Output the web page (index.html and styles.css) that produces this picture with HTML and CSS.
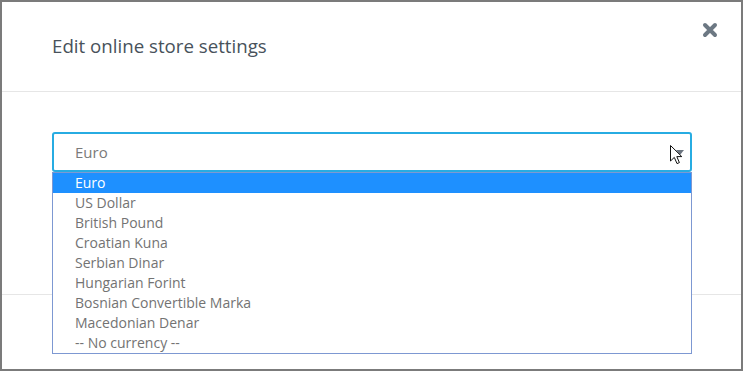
FILE: index.html
```html
<!DOCTYPE html>
<html lang="en">
<head>
    <meta charset="UTF-8">
    <meta name="viewport" content="width=device-width, initial-scale=1.0">
    <title>Edit online store settings</title>
    <link rel="stylesheet" href="styles.css">
</head>
<body>
    <div class="modal">
        <div class="modal-header">
            <h4 class="modal-title">Edit online store settings</h4>
            <button class="close" type="button" aria-label="Close">
                <svg width="16" height="16" viewBox="0 0 16 16">
                    <path d="M3 3 L13 13 M13 3 L3 13" stroke="#6c7883" stroke-width="4" stroke-linecap="round"/>
                </svg>
            </button>
        </div>

        <div class="modal-body">
            <div class="select-wrap">
                <div class="select">
                    <span class="select-value">Euro</span>
                    <span class="select-arrow"></span>
                </div>
                <svg class="cursor" width="13" height="20" viewBox="0 0 13 20">
                    <path d="M0.5 0.5 L0.5 16 L4.3 12.4 L7 18.6 L9.4 17.6 L6.8 11.6 L11.8 11.6 Z" fill="#fff" stroke="#111" stroke-width="1"/>
                </svg>
                <ul class="options">
                    <li class="option selected">Euro</li>
                    <li class="option">US Dollar</li>
                    <li class="option">British Pound</li>
                    <li class="option">Croatian Kuna</li>
                    <li class="option">Serbian Dinar</li>
                    <li class="option">Hungarian Forint</li>
                    <li class="option">Bosnian Convertible Marka</li>
                    <li class="option">Macedonian Denar</li>
                    <li class="option">-- No currency --</li>
                </ul>
            </div>
        </div>

        <div class="modal-footer"></div>
    </div>
</body>
</html>
```

FILE: styles.css
```css
body {
    margin: 0;
    padding: 2px;
    height: 100vh;
    box-sizing: border-box;
    background-color: #7b7b7b;
    font-family: "Open Sans", Arial, sans-serif;
    overflow: hidden;
}

.modal {
    position: relative;
    height: 100%;
    background-color: #fff;
}

.modal-header {
    padding: 31px 50px 32px 50px;
    border-bottom: 1px solid #e6e6e6;
}

.modal-title {
    margin: 0;
    font-size: 18.7px;
    line-height: 26px;
    font-weight: 400;
    color: #48525b;
}

.close {
    position: absolute;
    top: 20px;
    right: 23px;
    padding: 0;
    border: 0;
    background: none;
    width: 16px;
    height: 16px;
}

.close svg {
    display: block;
}

.modal-body {
    padding: 40px 49px 122px 50px;
    border-bottom: 1px solid #e6e6e6;
}

.select-wrap {
    position: relative;
}

.select {
    display: flex;
    align-items: center;
    justify-content: space-between;
    height: 40px;
    box-sizing: border-box;
    padding: 0 6px 0 21px;
    border: 2px solid #27ace2;
    border-radius: 3px;
    font-size: 15px;
    color: #7a7a7a;
}

.select-arrow {
    width: 0;
    height: 0;
    margin-top: 1px;
    border-left: 4px solid transparent;
    border-right: 4px solid transparent;
    border-top: 5px solid #6c7580;
}

.cursor {
    position: absolute;
    top: 13px;
    left: 618px;
}

.options {
    position: absolute;
    top: 40px;
    left: 0;
    right: 0;
    margin: 0;
    padding: 0;
    list-style: none;
    background-color: #fff;
    border: 1px solid #7d98d2;
}

.option {
    height: 20px;
    line-height: 20px;
    padding-left: 22px;
    font-size: 14px;
    color: #737373;
}

.option.selected {
    background-color: #1e90ff;
    color: #fff;
}
```
